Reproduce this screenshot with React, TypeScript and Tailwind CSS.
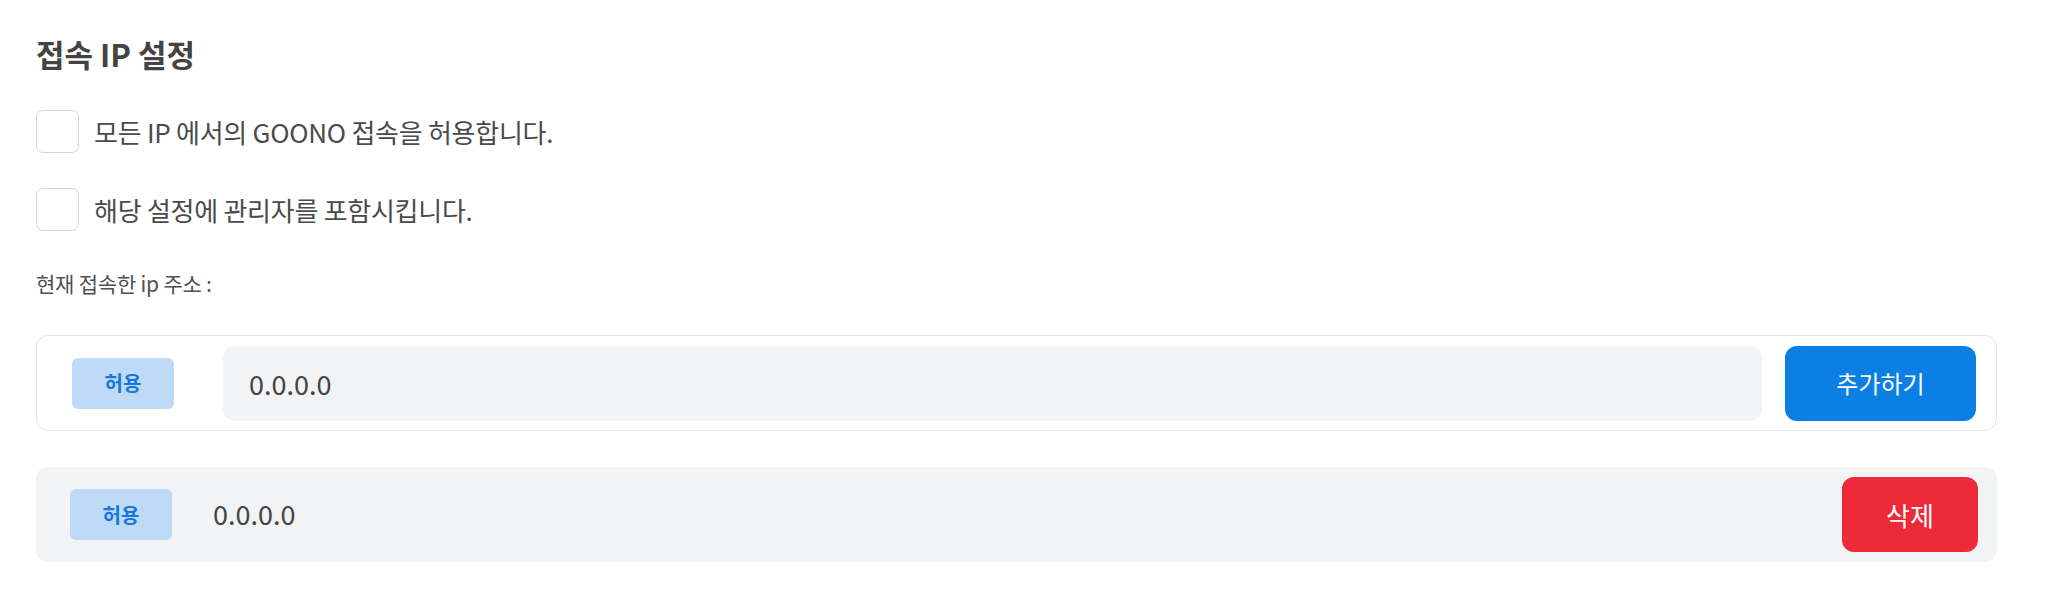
import { useState } from "react";

const font = { fontFamily: '"Noto Sans CJK KR", "Noto Sans", sans-serif' };

function Checkbox({ label }: { label: string }) {
  const [checked, setChecked] = useState(false);
  return (
    <label className="flex items-center gap-[15px] cursor-pointer">
      <span
        onClick={() => setChecked(!checked)}
        className={`size-[43px] rounded-[7px] border border-[#d4d7dc] ${checked ? "bg-[#0b7fe3]" : "bg-white"}`}
      />
      <span className="text-[26px] tracking-[-0.01em] text-[#4a4a4a]">{label}</span>
    </label>
  );
}

function Badge() {
  return (
    <span className="w-[102px] h-[51px] rounded-[6px] bg-[#bfdaf6] grid place-items-center text-[20px] font-bold text-[#1677dc]">
      허용
    </span>
  );
}

export default function App() {
  const [ip, setIp] = useState("0.0.0.0");
  const [list, setList] = useState(["0.0.0.0"]);

  return (
    <div style={font} className="bg-white w-[2048px] h-[613px] pl-[36px] pr-[51px] pt-[32px]">
      <h2 className="text-[31px] font-bold text-[#444] leading-[44px]">접속 IP 설정</h2>

      <div className="mt-[34px] flex flex-col gap-[35px]">
        <Checkbox label="모든 IP 에서의 GOONO 접속을 허용합니다." />
        <Checkbox label="해당 설정에 관리자를 포함시킵니다." />
      </div>

      <p className="mt-[38px] text-[21px] tracking-[-0.01em] text-[#505050] leading-[28px]">현재 접속한 ip 주소 :</p>

      <div className="mt-[38px] h-[96px] rounded-[12px] border border-[#e3e5e8] flex items-center pl-[35px] pr-[20px]">
        <Badge />
        <input
          value={ip}
          onChange={(e) => setIp(e.target.value)}
          className="ml-[49px] flex-1 h-[75px] rounded-[12px] bg-[#f1f3f5] px-[26px] text-[27px] text-[#444] outline-none"
        />
        <button
          onClick={() => setList([...list, ip])}
          className="ml-[23px] w-[191px] h-[75px] rounded-[12px] bg-[#0b7fe3] text-white text-[24px]"
        >
          추가하기
        </button>
      </div>

      <div className="mt-[36px] flex flex-col gap-3">
        {list.slice(0, 1).map((item, i) => (
          <div key={i} className="h-[95px] rounded-[12px] bg-[#f1f3f5] flex items-center pl-[34px] pr-[19px]">
            <Badge />
            <span className="ml-[41px] flex-1 text-[27px] text-[#444]">{item}</span>
            <button className="w-[136px] h-[75px] rounded-[12px] bg-[#ed2a37] text-white text-[26px]">
              삭제
            </button>
          </div>
        ))}
      </div>
    </div>
  );
}
